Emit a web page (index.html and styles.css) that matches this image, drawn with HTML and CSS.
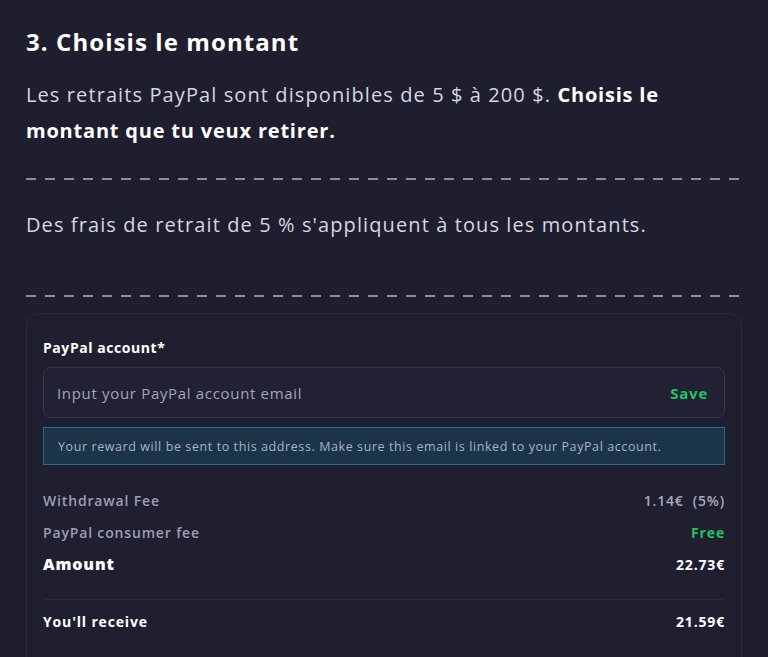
FILE: index.html
```html
<!DOCTYPE html>
<html lang="fr">
<head>
<meta charset="utf-8">
<title>Choisis le montant</title>
<link rel="stylesheet" href="styles.css">
</head>
<body>
<main class="page">
  <h2 class="title">3. Choisis le montant</h2>
  <p class="lead">Les retraits PayPal sont disponibles de 5 $ à 200 $. <strong>Choisis le montant que tu veux retirer.</strong></p>
  <div class="dashes"></div>
  <p class="note">Des frais de retrait de 5 % s'appliquent à tous les montants.</p>
  <div class="dashes dashes-low"></div>
  <section class="card">
    <label class="label" for="email">PayPal account*</label>
    <div class="field">
      <input id="email" class="input" type="text" placeholder="Input your PayPal account email">
      <span class="save">Save</span>
    </div>
    <div class="info">Your reward will be sent to this address. Make sure this email is linked to your PayPal account.</div>
    <div class="rows">
      <div class="row"><span class="k">Withdrawal Fee</span><span class="v">1.14€ &nbsp;(5%)</span></div>
      <div class="row"><span class="k">PayPal consumer fee</span><span class="v green">Free</span></div>
      <div class="row amount"><span class="k">Amount</span><span class="v">22.73€</span></div>
    </div>
    <div class="divider"></div>
    <div class="row total"><span class="k">You'll receive</span><span class="v">21.59€</span></div>
  </section>
</main>
</body>
</html>
```
FILE: styles.css
```css
* { box-sizing: border-box; }
html, body { margin: 0; padding: 0; background: #1e1e2e; height: 100%; overflow: hidden; }
body { font-family: "Open Sans", "Noto Sans", sans-serif; color: #d4d4de; }
.page { padding: 26px 26px 0 26px; width: 768px; }
.title { margin: 0; font-size: 24px; line-height: 32px; font-weight: 700; color: #ffffff; letter-spacing: 0.045em; }
.lead { margin: 19px 0 0 0; font-size: 20px; line-height: 36px; color: #d6d6e0; letter-spacing: 0.055em; }
.lead strong { color: #ffffff; font-weight: 700; letter-spacing: 0.04em; }
.dashes { height: 2px; margin-top: 29px; background-image: repeating-linear-gradient(90deg, #8a8ea4 0 10px, transparent 10px 19px); }
.note { margin: 27px 0 0 0; font-size: 20px; line-height: 36px; color: #d6d6e0; letter-spacing: 0.055em; }
.dashes-low { margin-top: 52px; }
.card { margin-top: 16px; border: 1px solid #2c2c40; border-radius: 12px; background: #1f1f30; padding: 24px 16px 40px 16px; height: 400px; }
.label { display: block; font-size: 14px; line-height: 20px; font-weight: 700; color: #ffffff; letter-spacing: 0.04em; }
.field { margin-top: 9px; height: 51px; border: 1px solid #34344a; border-radius: 8px; background: #212133; display: flex; align-items: center; padding: 0 16px 0 13px; }
.input { flex: 1; background: transparent; border: 0; outline: none; font-family: inherit; font-size: 15px; color: #ffffff; padding: 0; letter-spacing: 0.045em; }
.input::placeholder { color: #a4a4ba; }
.save { font-size: 15px; font-weight: 700; color: #22c55e; letter-spacing: 0.05em; }
.info { margin-top: 9px; height: 38px; border: 1px solid #1f6e8e; background: #1c3448; display: flex; align-items: center; padding: 0 14px; font-size: 12.5px; color: #a9b3c6; letter-spacing: 0.047em; }
.rows { margin-top: 24px; display: flex; flex-direction: column; gap: 10px; }
.row { display: flex; justify-content: space-between; align-items: center; height: 22px; font-size: 14px; font-weight: 600; letter-spacing: 0.06em; }
.row .k { color: #9d9db8; }
.row .v { color: #a8a8bf; }
.row .v.green { color: #22c55e; font-weight: 700; }
.amount .k { color: #ffffff; font-size: 16px; font-weight: 800; }
.amount .v { color: #ffffff; font-weight: 700; }
.divider { margin-top: 24px; height: 1px; background: #2c2c3e; }
.total { margin-top: 10px; }
.total .k, .total .v { color: #ffffff; font-weight: 700; }
```
